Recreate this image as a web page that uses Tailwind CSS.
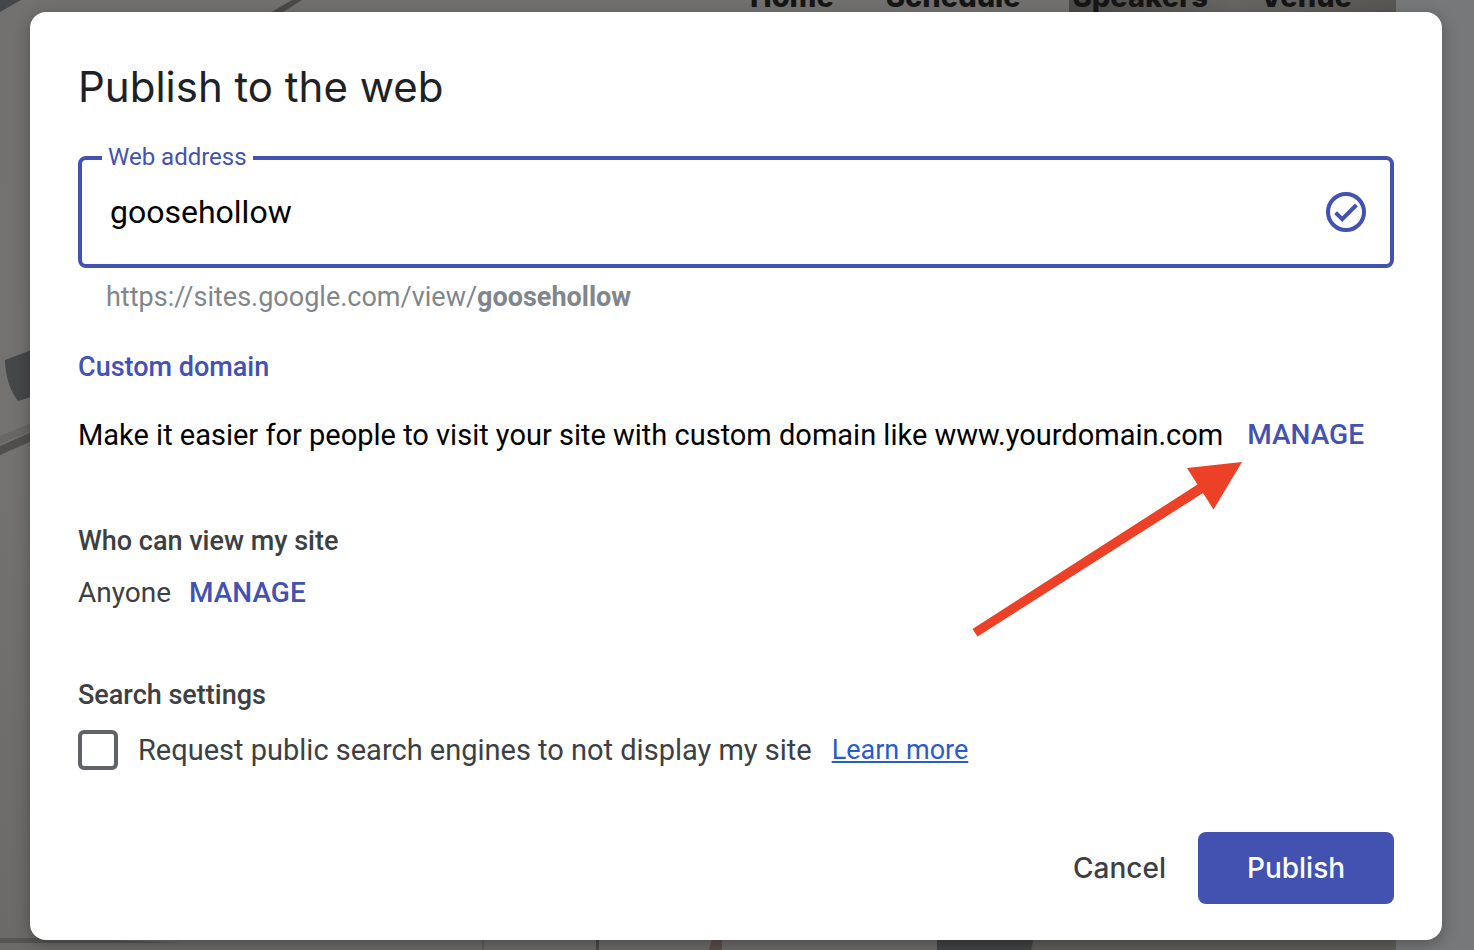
<!DOCTYPE html>
<html lang="en">
<head>
    <meta charset="UTF-8">
    <meta name="viewport" content="width=device-width, initial-scale=1.0">
    <title>Publish to the web</title>
    <script src="https://cdn.jsdelivr.net/npm/@tailwindcss/browser@4"></script>
</head>
<body class="relative min-h-screen overflow-x-hidden bg-[#77787a] font-[Roboto,sans-serif]">

    <!-- Site preview behind the dialog -->
    <div class="absolute inset-0 overflow-hidden" aria-hidden="true">
        <svg class="absolute inset-0 w-full h-full" viewBox="0 0 1474 950" preserveAspectRatio="none">
            <defs>
                <linearGradient id="wall" x1="0" y1="0" x2="0" y2="1">
                    <stop offset="0" stop-color="#727170"/>
                    <stop offset="0.5" stop-color="#737271"/>
                    <stop offset="1" stop-color="#6b6a68"/>
                </linearGradient>
                <linearGradient id="photo" x1="0" y1="0" x2="1" y2="0">
                    <stop offset="0" stop-color="#4c4b4a"/>
                    <stop offset="0.5" stop-color="#686663"/>
                    <stop offset="1" stop-color="#595754"/>
                </linearGradient>
            </defs>
            <rect width="1396" height="950" fill="url(#wall)"/>
            <path d="M0 0H21L0 12Z" fill="#444749"/>
            <path d="M268 14L292 0H302L280 14Z" fill="#4b4a48"/>
            <rect x="1069" width="327" height="20" fill="url(#photo)"/>
            <path d="M5 360L34 349V396L18 401Q6 386 5 360Z" fill="#454849"/>
            <path d="M0 436L34 422V430L0 444Z" fill="#686765"/>
            <path d="M0 446L34 431V440L0 455Z" fill="#504f4c"/>
            <path d="M0 938H60L184 943H0Z" fill="#565553"/>
            <rect x="482" y="938" width="2" height="12" fill="#5c5c5b"/>
            <rect x="596" y="938" width="3" height="12" fill="#494949"/>
            <path d="M712 938H722V950H709Z" fill="#5b4c49"/>
            <rect x="937" y="938" width="459" height="12" fill="#5f5e5b"/>
            <path d="M937 938H1034L1031 950H937Z" fill="#414344"/>
        </svg>
        <div class="relative flex justify-end gap-[52px] pr-[122px] -mt-[21px] text-[29px] leading-9 font-extrabold text-[#161616] font-[Inter,sans-serif]">
            <span>Home</span>
            <span>Schedule</span>
            <span>Speakers</span>
            <span>Venue</span>
        </div>
    </div>

    <div class="relative pt-3 pr-8 pb-2.5 pl-[30px]">
        <form role="dialog" aria-labelledby="dialog-title" class="rounded-2xl bg-white px-12 pt-12 pb-9 shadow-[0_4px_16px_rgba(0,0,0,0.3)]">
            <h1 id="dialog-title" class="text-[42px] leading-[54px] text-[#202124] font-[Inter,sans-serif]">Publish to the web</h1>

            <div class="relative mt-[42px] flex h-28 items-center rounded-lg border-4 border-[#4352b1] pr-6 pl-7">
                <label for="address" class="absolute -top-[19px] left-5 bg-white px-1.5 text-2xl text-[#4352b1]">Web address</label>
                <input id="address" type="text" value="goosehollow" class="min-w-0 flex-1 bg-transparent text-[32px] leading-10 text-black outline-none">
                <svg class="size-10 shrink-0" viewBox="0 0 40 40" fill="none" stroke="#4352b1" stroke-width="4" aria-hidden="true">
                    <circle cx="20" cy="20" r="18"/>
                    <path d="M9.600 20.600L16.200 27.200L30.400 13"/>
                </svg>
            </div>
            <p class="mt-[13px] pl-7 text-[27px] leading-8 text-[#80868b]">https://sites.google.com/view/<b>goosehollow</b></p>

            <h2 class="mt-[38px] text-[27px] leading-8 font-medium text-[#4352b1]">Custom domain</h2>
            <div class="relative mt-8 flex items-center gap-6 text-[29px] leading-10">
                <p class="text-black">Make it easier for people to visit your site with custom domain like www.yourdomain.com</p>
                <button type="button" class="text-[28px] font-medium text-[#4352b1]">MANAGE</button>
                <!-- Arrow pointing at the domain button -->
                <svg class="pointer-events-none absolute top-[46px] right-[150px] h-[176px] w-[272px]" viewBox="0 0 272 176" fill="#ec4027" aria-hidden="true">
                    <path d="M0.500 168L225.500 23.500L215 7L270 1L241.500 48.500L231 32L5.500 175.500Z"/>
                </svg>
            </div>

            <h2 class="mt-[70px] text-[27px] leading-8 font-medium text-[#3c4043]">Who can view my site</h2>
            <div class="mt-4 flex items-center gap-[18px] text-[28px] leading-10">
                <span class="text-[#3c4043]">Anyone</span>
                <button type="button" class="font-medium text-[#4352b1]">MANAGE</button>
            </div>

            <h2 class="mt-[66px] text-[27px] leading-8 font-medium text-[#3c4043]">Search settings</h2>
            <div class="mt-[19px] flex items-center gap-5 text-[29px] leading-10">
                <input id="noindex" type="checkbox" class="size-10 shrink-0 appearance-none rounded-md border-4 border-[#5f6368] checked:bg-[#4352b1]">
                <label for="noindex" class="text-[#3c4043]">Request public search engines to not display my site</label>
                <a href="#" class="text-[27px] text-[#2a5bcb] underline">Learn more</a>
            </div>

            <div class="mt-[62px] flex items-center justify-end gap-8 text-[28px] font-[Inter,sans-serif] font-medium">
                <button type="button" class="h-18 text-[#3c4043]">Cancel</button>
                <button type="submit" class="h-18 w-[196px] rounded-lg bg-[#4352b1] text-white">Publish</button>
            </div>
        </form>
    </div>

</body>
</html>
